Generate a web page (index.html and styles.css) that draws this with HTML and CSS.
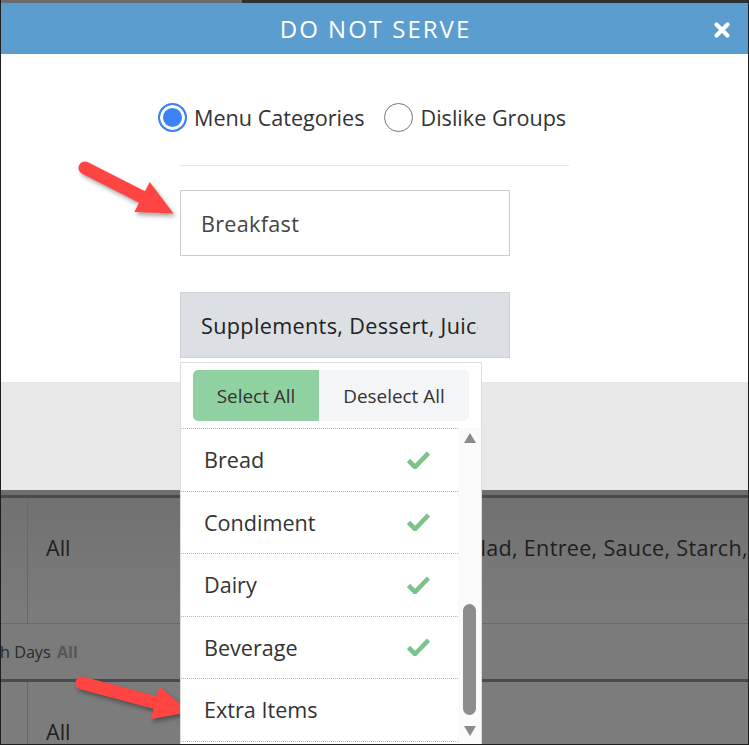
FILE: index.html
```html
<!DOCTYPE html>
<html lang="en">
<head>
<meta charset="utf-8">
<title>Do Not Serve</title>
<link rel="stylesheet" href="styles.css">
</head>
<body>
<div class="frame">
  <div class="topstrip"><div class="ts-left"></div><div class="ts-right"></div></div>
  <div class="modal">
    <header class="m-head">
      <h1 class="m-title">DO NOT SERVE</h1>
      <button class="m-close" aria-label="Close">
        <svg viewBox="0 0 18 18" width="18" height="18"><path d="M3.5 3.5 L14.5 14.5 M14.5 3.5 L3.5 14.5" stroke="#fff" stroke-width="4.2" stroke-linecap="round"/></svg>
      </button>
    </header>
    <div class="m-body">
      <div class="radios">
        <label class="radio"><span class="dot on"></span>Menu Categories</label>
        <label class="radio"><span class="dot"></span>Dislike Groups</label>
      </div>
      <div class="col">
        <div class="divider"></div>
        <div class="field">Breakfast</div>
        <div class="dd">
          <div class="dd-btn"><span class="dd-text">Supplements, Dessert, Juice, Bread, Condiment</span></div>
          <div class="dd-panel">
            <div class="dd-actions">
              <button class="btn-sel">Select All</button>
              <button class="btn-desel">Deselect All</button>
            </div>
            <div class="dd-body">
              <ul class="dd-list">
                <li><span>Bread</span><svg class="check" viewBox="0 0 23 18" width="23" height="18"><path d="M1.5 9.5 L8 16 L21.5 2" fill="none" stroke="#7cc38b" stroke-width="4.6"/></svg></li>
                <li><span>Condiment</span><svg class="check" viewBox="0 0 23 18" width="23" height="18"><path d="M1.5 9.5 L8 16 L21.5 2" fill="none" stroke="#7cc38b" stroke-width="4.6"/></svg></li>
                <li><span>Dairy</span><svg class="check" viewBox="0 0 23 18" width="23" height="18"><path d="M1.5 9.5 L8 16 L21.5 2" fill="none" stroke="#7cc38b" stroke-width="4.6"/></svg></li>
                <li><span>Beverage</span><svg class="check" viewBox="0 0 23 18" width="23" height="18"><path d="M1.5 9.5 L8 16 L21.5 2" fill="none" stroke="#7cc38b" stroke-width="4.6"/></svg></li>
                <li><span>Extra Items</span></li>
              </ul>
              <div class="scrollbar">
                <span class="sb-up"></span>
                <span class="sb-thumb"></span>
                <span class="sb-down"></span>
              </div>
            </div>
          </div>
        </div>
      </div>
    </div>
    <div class="m-foot"></div>
  </div>
  <div class="page">
    <div class="p-top"></div>
    <div class="p-sep"></div>
    <div class="p-row">
      <div class="p-c0"></div>
      <div class="p-c1">All</div>
      <div class="p-c2">Salad, Entree, Sauce, Starch,</div>
    </div>
    <div class="p-days">h Days <b>All</b></div>
    <div class="p-sep"></div>
    <div class="p-row p-last">
      <div class="p-c0"></div>
      <div class="p-c1">All</div>
    </div>
  </div>
  <svg class="arrows" width="749" height="745" viewBox="0 0 749 745">
    <g fill="#ff4444">
      <line x1="84" y1="168" x2="144" y2="198.5" stroke="#ff4444" stroke-width="13" stroke-linecap="round"/>
      <polygon points="148.7,181.9 133.3,212.1 172.5,213.5"/>
      <line x1="81" y1="683" x2="156" y2="703" stroke="#ff4444" stroke-width="13" stroke-linecap="round"/>
      <polygon points="158.6,686.5 149.8,719.3 188.5,712"/>
    </g>
  </svg>
</div>
</body>
</html>
```

FILE: styles.css
```css
* { box-sizing: border-box; }

html, body { margin: 0; padding: 0; }

body {
  width: 749px;
  height: 745px;
  overflow: hidden;
  font-family: "Open Sans", "Liberation Sans", sans-serif;
  background: #7a7a7a;
}

.frame {
  position: relative;
  width: 749px;
  height: 745px;
  overflow: hidden;
  display: flex;
  flex-direction: column;
  border: 1px solid #1e1e1e;
  border-top: 0;
  background: #7a7a7a;
}

.topstrip { height: 3px; display: flex; flex: none; }
.ts-left { width: 241px; background: #6c6c6c; }
.ts-right { flex: 1; background: #2d3035; }

.modal { flex: none; }

.m-head {
  height: 51px;
  background: #5b9dcf;
  display: grid;
  grid-template-columns: 1fr auto 1fr;
  align-items: center;
  color: #fff;
}

.m-title {
  grid-column: 2;
  margin: 0;
  font-weight: 400;
  font-size: 24px;
  letter-spacing: 2px;
  padding-left: 2px;
  padding-bottom: 1px;
}

.m-close {
  grid-column: 3;
  justify-self: end;
  margin-right: 17px;
  margin-top: 2px;
  width: 18px;
  height: 18px;
  padding: 0;
  border: 0;
  background: none;
  display: flex;
}

.m-body {
  height: 328px;
  background: #fff;
}

.radios {
  display: flex;
  gap: 20px;
  padding: 49px 0 0 157px;
}

.radio {
  display: flex;
  align-items: center;
  gap: 7px;
  height: 29px;
  font-size: 21.6px;
  color: #333;
}

.dot {
  width: 29px;
  height: 29px;
  border-radius: 50%;
  border: 1.5px solid #767676;
  background: #fff;
  flex: none;
}

.dot.on {
  border: 2px solid #3b82f6;
  box-shadow: inset 0 0 0 3px #fff;
  background: #3b82f6;
}

.col {
  margin-left: 179px;
  width: 389px;
}

.divider {
  height: 1px;
  margin-top: 33px;
  background: #e5e5e5;
}

.field {
  margin-top: 24px;
  width: 330px;
  height: 66px;
  border: 1px solid #cccccc;
  display: flex;
  align-items: center;
  padding-left: 20px;
  font-size: 21.6px;
  letter-spacing: 0.3px;
  color: #444;
}

.dd {
  position: relative;
  margin-top: 36px;
  width: 330px;
}

.dd-btn {
  height: 66px;
  background: #dcdfe3;
  border: 1px solid #cdd1d6;
  display: flex;
  align-items: center;
  padding: 0 31px 0 20px;
  font-size: 21.6px;
  letter-spacing: 0.35px;
  color: #222;
}

.dd-text {
  min-width: 0;
  white-space: nowrap;
  overflow: hidden;
}

.dd-panel {
  position: absolute;
  top: calc(100% + 4px);
  left: 0;
  width: 302px;
  background: #fff;
  border: 1px solid #dddddd;
  border-bottom: 0;
  z-index: 5;
}

.dd-actions {
  display: flex;
  padding: 7px 12px;
}

.dd-actions button {
  height: 51px;
  border: 0;
  font-family: "Open Sans", "Liberation Sans", sans-serif;
  font-size: 18.9px;
  color: #333;
  padding: 0;
}

.btn-sel {
  width: 126px;
  background: #90d1a1;
  border-radius: 5px 0 0 5px;
}

.btn-desel {
  flex: 1;
  background: #f4f5f7;
  border-radius: 0 5px 5px 0;
}

.dd-body {
  display: flex;
  height: 320px;
}

.dd-list {
  list-style: none;
  margin: 0;
  padding: 0;
  width: 277px;
  border-top: 1px dotted #b5b5b5;
}

.dd-list li {
  height: 62.5px;
  border-bottom: 1px dotted #b5b5b5;
  display: flex;
  align-items: center;
  justify-content: space-between;
  padding: 0 28px 0 23px;
  font-size: 21.6px;
  color: #333;
}

.scrollbar {
  width: 23px;
  background: #fafafa;
  display: flex;
  flex-direction: column;
  align-items: center;
}

.sb-up {
  margin-top: 5px;
  width: 0;
  height: 0;
  border-left: 6.5px solid transparent;
  border-right: 6.5px solid transparent;
  border-bottom: 10px solid #8a8a8a;
}

.sb-thumb {
  margin-top: 161px;
  width: 13px;
  height: 111px;
  border-radius: 7px;
  background: #8c8c8c;
}

.sb-down {
  margin-top: 11px;
  width: 0;
  height: 0;
  border-left: 6.5px solid transparent;
  border-right: 6.5px solid transparent;
  border-top: 10px solid #8a8a8a;
}

.m-foot {
  height: 108px;
  background: #e8e8e8;
}

.page {
  flex: 1;
  display: flex;
  flex-direction: column;
  background: #7b7b7b;
  color: #1f1f1f;
}

.p-top { height: 5px; background: #6e6e6e; flex: none; }
.p-sep { height: 3px; background: #464a51; flex: none; }

.p-row {
  height: 126px;
  flex: none;
  display: flex;
  border-bottom: 1px solid #6a6a6a;
  background: linear-gradient(#717171, #7c7c7c);
  font-size: 21.6px;
  line-height: 28px;
}

.p-last {
  flex: 1;
  border-bottom: 0;
  background: #7c7c7c;
}

.p-c0 {
  width: 27px;
  border-right: 1px solid #686868;
  flex: none;
}

.p-c1 {
  width: 428px;
  flex: none;
  padding: 36px 0 0 18px;
}

.p-c2 {
  padding-top: 36px;
  white-space: nowrap;
  letter-spacing: 0.3px;
}

.p-days {
  height: 55px;
  flex: none;
  display: flex;
  align-items: center;
  gap: 3px;
  font-size: 16.2px;
  color: #2a2a2a;
  text-indent: -1px;
  white-space: pre;
}

.p-days b { color: #565656; font-weight: 700; }

.arrows {
  position: absolute;
  left: 0;
  top: 0;
  pointer-events: none;
  filter: drop-shadow(2px 3px 2px rgba(0, 0, 0, 0.35));
}
```
